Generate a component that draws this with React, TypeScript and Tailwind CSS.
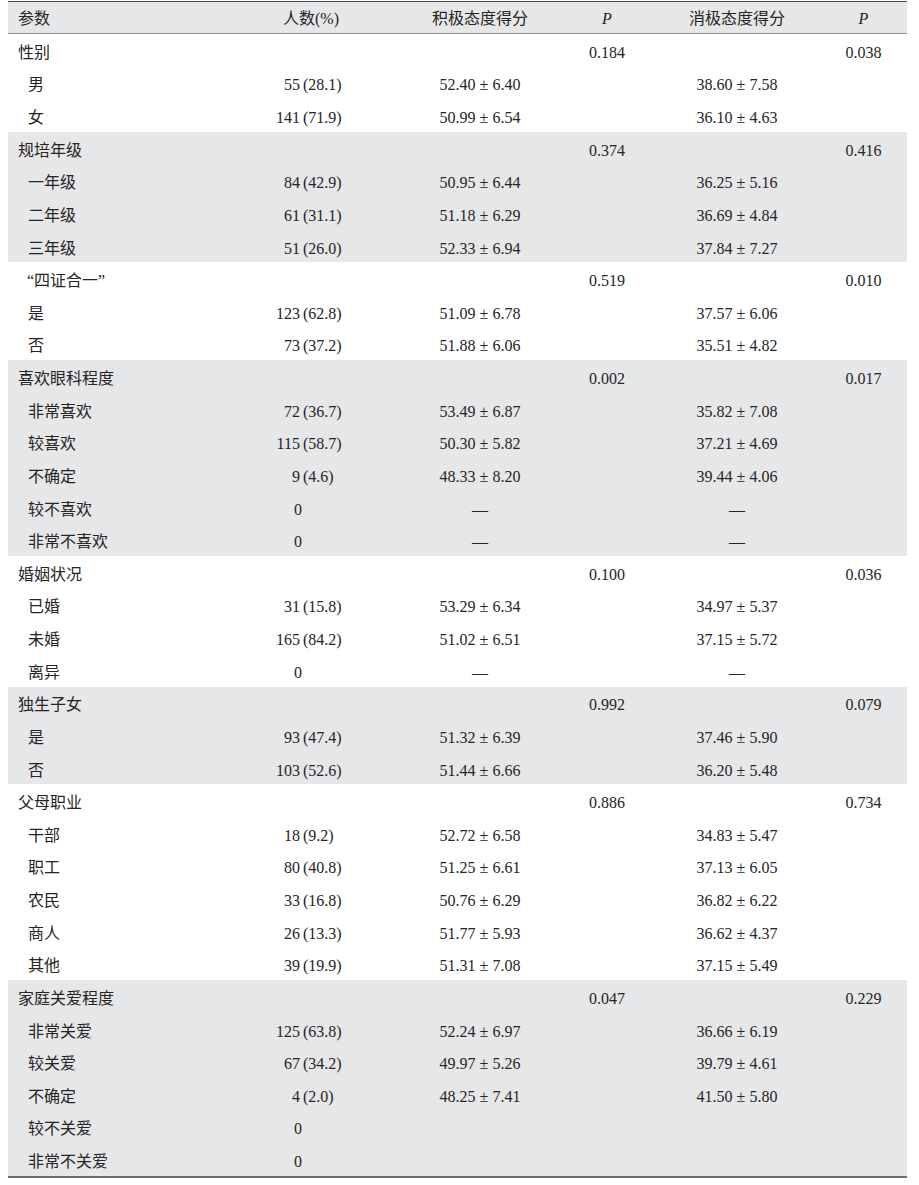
type Row = [string, string, string, string, string];

type Group = {
  label: string;
  p1: string;
  p2: string;
  rows: Row[];
};

const groups: Group[] = [
  {
    label: "性别",
    p1: "0.184",
    p2: "0.038",
    rows: [
      ["男", "55", "(28.1)", "52.40 ± 6.40", "38.60 ± 7.58"],
      ["女", "141", "(71.9)", "50.99 ± 6.54", "36.10 ± 4.63"],
    ],
  },
  {
    label: "规培年级",
    p1: "0.374",
    p2: "0.416",
    rows: [
      ["一年级", "84", "(42.9)", "50.95 ± 6.44", "36.25 ± 5.16"],
      ["二年级", "61", "(31.1)", "51.18 ± 6.29", "36.69 ± 4.84"],
      ["三年级", "51", "(26.0)", "52.33 ± 6.94", "37.84 ± 7.27"],
    ],
  },
  {
    label: "“四证合一”",
    p1: "0.519",
    p2: "0.010",
    rows: [
      ["是", "123", "(62.8)", "51.09 ± 6.78", "37.57 ± 6.06"],
      ["否", "73", "(37.2)", "51.88 ± 6.06", "35.51 ± 4.82"],
    ],
  },
  {
    label: "喜欢眼科程度",
    p1: "0.002",
    p2: "0.017",
    rows: [
      ["非常喜欢", "72", "(36.7)", "53.49 ± 6.87", "35.82 ± 7.08"],
      ["较喜欢", "115", "(58.7)", "50.30 ± 5.82", "37.21 ± 4.69"],
      ["不确定", "9", "(4.6)", "48.33 ± 8.20", "39.44 ± 4.06"],
      ["较不喜欢", "0", "", "—", "—"],
      ["非常不喜欢", "0", "", "—", "—"],
    ],
  },
  {
    label: "婚姻状况",
    p1: "0.100",
    p2: "0.036",
    rows: [
      ["已婚", "31", "(15.8)", "53.29 ± 6.34", "34.97 ± 5.37"],
      ["未婚", "165", "(84.2)", "51.02 ± 6.51", "37.15 ± 5.72"],
      ["离异", "0", "", "—", "—"],
    ],
  },
  {
    label: "独生子女",
    p1: "0.992",
    p2: "0.079",
    rows: [
      ["是", "93", "(47.4)", "51.32 ± 6.39", "37.46 ± 5.90"],
      ["否", "103", "(52.6)", "51.44 ± 6.66", "36.20 ± 5.48"],
    ],
  },
  {
    label: "父母职业",
    p1: "0.886",
    p2: "0.734",
    rows: [
      ["干部", "18", "(9.2)", "52.72 ± 6.58", "34.83 ± 5.47"],
      ["职工", "80", "(40.8)", "51.25 ± 6.61", "37.13 ± 6.05"],
      ["农民", "33", "(16.8)", "50.76 ± 6.29", "36.82 ± 6.22"],
      ["商人", "26", "(13.3)", "51.77 ± 5.93", "36.62 ± 4.37"],
      ["其他", "39", "(19.9)", "51.31 ± 7.08", "37.15 ± 5.49"],
    ],
  },
  {
    label: "家庭关爱程度",
    p1: "0.047",
    p2: "0.229",
    rows: [
      ["非常关爱", "125", "(63.8)", "52.24 ± 6.97", "36.66 ± 6.19"],
      ["较关爱", "67", "(34.2)", "49.97 ± 5.26", "39.79 ± 4.61"],
      ["不确定", "4", "(2.0)", "48.25 ± 7.41", "41.50 ± 5.80"],
      ["较不关爱", "0", "", "", ""],
      ["非常不关爱", "0", "", "", ""],
    ],
  },
];

const grid =
  "grid grid-cols-[242px_150px_160px_94px_166px_87px] items-center";

function GroupBlock({ group, shaded }: { group: Group; shaded: boolean }) {
  const quoted = group.label.startsWith("“");
  return (
    <div className={shaded ? "bg-[#e6e7e8]" : "bg-white"}>
      <div className={`${grid} h-[32.63px] pt-[5px]`}>
        <div className={`text-[16px] ${quoted ? "pl-[19px]" : "pl-[10px]"}`}>
          {group.label}
        </div>
        <div />
        <div />
        <div className="text-center text-[16px]">{group.p1}</div>
        <div />
        <div className="text-center text-[16px]">{group.p2}</div>
      </div>
      {group.rows.map((r, i) => (
        <div key={i} className={`${grid} h-[32.63px] pt-[5px]`}>
          <div className="pl-[20px] text-[16px]">{r[0]}</div>
          <div className="flex text-[16px]">
            <span className={`w-[50px] text-right ${r[2] ? "" : "translate-x-[2px]"}`}>
              {r[1]}
            </span>
            {r[2] && <span className="ml-[3px]">{r[2]}</span>}
          </div>
          <div className="text-center text-[16px]">{r[3]}</div>
          <div />
          <div className="text-center text-[16px]">{r[4]}</div>
          <div />
        </div>
      ))}
    </div>
  );
}

export default function App() {
  return (
    <div className="min-h-screen bg-white pt-[1px] font-['Liberation_Serif','Noto_Sans_CJK_SC',serif] text-[#262425]">
      <div className="ml-[8px] w-[899px]">
        <div
          className={`${grid} h-[33px] pt-[2px] border-t-[1.5px] border-b-[1.5px] border-t-[#4a4a4a] border-b-[#8e8e8e] bg-[#e6e7e8]`}
        >
          <div className="pl-[10px] text-[16px]">参数</div>
          <div className="pr-[61px] text-right text-[16px]">
            人数<span className="text-[16px]">(%)</span>
          </div>
          <div className="text-center text-[16px]">积极态度得分</div>
          <div className="text-center text-[16px] italic">P</div>
          <div className="text-center text-[16px]">消极态度得分</div>
          <div className="text-center text-[16px] italic">P</div>
        </div>
        {groups.map((g, i) => (
          <GroupBlock key={g.label} group={g} shaded={i % 2 === 1} />
        ))}
        <div className="h-[2px] bg-[#6e6e6e]" />
      </div>
    </div>
  );
}
